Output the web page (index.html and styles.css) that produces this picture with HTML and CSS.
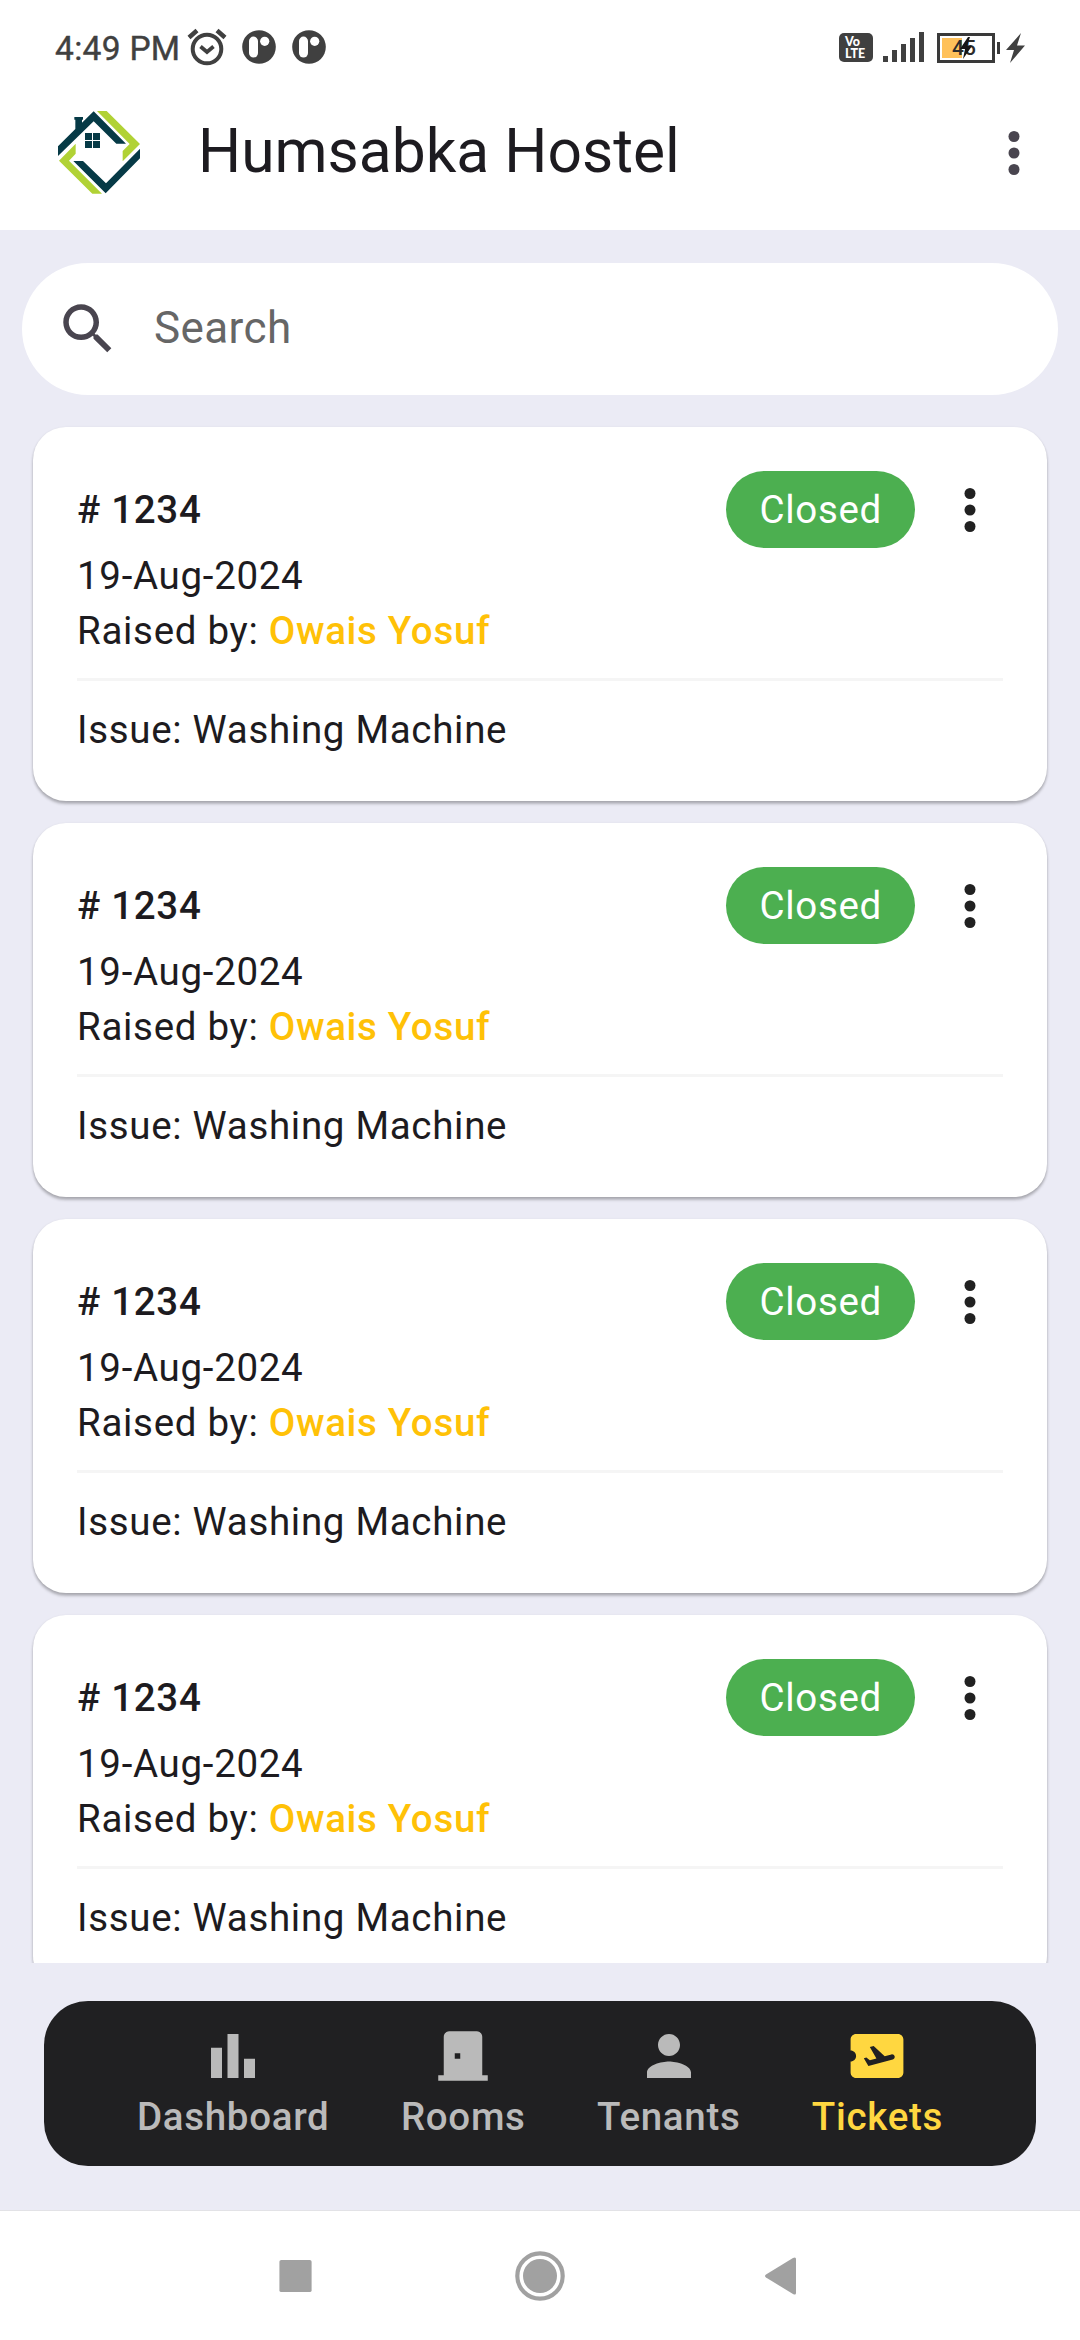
FILE: index.html
```html
<!DOCTYPE html>
<html lang="en">
<head>
<meta charset="utf-8">
<title>Humsabka Hostel</title>
<link rel="stylesheet" href="styles.css">
</head>
<body>
<svg class="defs" aria-hidden="true">
  <symbol id="more" viewBox="0 0 24 24"><circle cx="12" cy="6" r="2"/><circle cx="12" cy="12" r="2"/><circle cx="12" cy="18" r="2"/></symbol>
  <symbol id="chat" viewBox="0 0 34 34"><circle cx="17" cy="17" r="16.8"/><rect x="7" y="6.6" width="9" height="21" rx="4.5" fill="#fff"/><circle cx="22.7" cy="11.3" r="4.6" fill="#fff"/></symbol>
</svg>
<div class="screen">
  <div class="status">
    <span class="time">4:49 PM</span>
    <svg class="alarm" viewBox="0 0 40 38"><g fill="none" stroke="#404040"><circle cx="20" cy="21" r="14.3" stroke-width="4"/><path d="M2 9.500 10 2.500M38 9.500 30 2.500" stroke-width="4.500"/><path d="M13.500 18.500 20 24 26.500 18.500" stroke-width="3.800"/></g></svg>
    <svg class="chat"><use href="#chat"/></svg>
    <svg class="chat"><use href="#chat"/></svg>
    <div class="status-right">
      <div class="volte"><span>Vo</span><span>LTE</span></div>
      <svg class="signal" viewBox="0 0 41 30"><path d="M0 24h5v6H0zM9 18h5v12H9zM18 12h5v18h-5zM27 6h5v24h-5zM36 0h5v30h-5z"/></svg>
      <div class="battery"><span class="level"></span><span class="percent">45</span>
        <svg class="charge" viewBox="0 0 16 22"><path d="M10 0 2 12h5L5 22l9-13H9l3-9z"/></svg></div>
      <span class="cap"></span>
      <svg class="bolt" viewBox="0 0 19 30"><path d="M15 0 0 17h8L4 30 19 12.500h-8z"/></svg>
    </div>
  </div>
  <header class="appbar">
    <svg class="logo" viewBox="0 0 300 300">
      <g fill="#b1d235"><path d="M141 30h29l100 99-52 52v-31l21-21z"/><path d="M77 128v30l-20 21 99 99h-29L27 179z"/></g>
      <g fill="#063a46"><path d="M24 165v-29l52-52V56h-3v-8h26v8h-3v9l35-34 97 97h-29l-68-67z"/><path d="M70 180h29l69 67 102-104v29L167 277z"/><path d="M105 96h21v21h-21zM129 96h21v21h-21zM105 120h21v21h-21zM129 120h21v21h-21z"/></g>
    </svg>
    <h1>Humsabka Hostel</h1>
    <svg class="icon"><use href="#more"/></svg>
  </header>
  <main>
    <div class="search">
      <svg class="icon" viewBox="0 0 24 24"><path d="M15.500 14h-.79l-.28-.27C15.410 12.590 16 11.110 16 9.500 16 5.910 13.090 3 9.500 3S3 5.910 3 9.500 5.910 16 9.500 16c1.610 0 3.090-.59 4.230-1.570l.27.28v.79l5 4.990L20.490 19l-4.990-5zm-6 0C7.010 14 5 11.990 5 9.500S7.010 5 9.500 5 14 7.010 14 9.500 11.990 14 9.500 14z"/></svg>
      <span>Search</span>
    </div>
    <div class="list">
      <article class="card">
        <div class="head"><strong># 1234</strong><span class="chip">Closed</span><svg class="icon"><use href="#more"/></svg></div>
        <p>19-Aug-2024</p>
        <p>Raised by: <b>Owais Yosuf</b></p>
        <hr>
        <p>Issue: Washing Machine</p>
      </article>
      <article class="card">
        <div class="head"><strong># 1234</strong><span class="chip">Closed</span><svg class="icon"><use href="#more"/></svg></div>
        <p>19-Aug-2024</p>
        <p>Raised by: <b>Owais Yosuf</b></p>
        <hr>
        <p>Issue: Washing Machine</p>
      </article>
      <article class="card">
        <div class="head"><strong># 1234</strong><span class="chip">Closed</span><svg class="icon"><use href="#more"/></svg></div>
        <p>19-Aug-2024</p>
        <p>Raised by: <b>Owais Yosuf</b></p>
        <hr>
        <p>Issue: Washing Machine</p>
      </article>
      <article class="card">
        <div class="head"><strong># 1234</strong><span class="chip">Closed</span><svg class="icon"><use href="#more"/></svg></div>
        <p>19-Aug-2024</p>
        <p>Raised by: <b>Owais Yosuf</b></p>
        <hr>
        <p>Issue: Washing Machine</p>
      </article>
    </div>
  </main>
  <nav class="tabs">
    <div class="tab"><svg class="icon" viewBox="0 0 24 24"><path d="M4 9h4v11H4zM16 13h4v7h-4zM10 4h4v16h-4z"/></svg><span>Dashboard</span></div>
    <div class="tab"><svg class="icon" viewBox="0 0 24 24"><path d="M19 19V5c0-1.100-.9-2-2-2H7c-1.100 0-2 .9-2 2v14H3v2h18v-2h-2zm-8-6H9v-2h2v2z"/></svg><span>Rooms</span></div>
    <div class="tab"><svg class="icon" viewBox="0 0 24 24"><path d="M12 12c2.210 0 4-1.790 4-4s-1.790-4-4-4-4 1.790-4 4 1.790 4 4 4zm0 2c-2.670 0-8 1.340-8 4v2h16v-2c0-2.660-5.330-4-8-4z"/></svg><span>Tenants</span></div>
    <div class="tab active"><svg class="icon" viewBox="0 0 24 24"><path d="M19.600 4H4.400c-1.100 0-2 .9-2 2v4c1.100 0 2 .9 2 2s-.9 2-2 2v4c0 1.100.9 2 2 2h15.200c1.100 0 2-.9 2-2V6c0-1.100-.9-2-2-2zm-1.870 9.300-8.860 2.360-1.660-2.880.93-.25 1.260.99 2.390-.64-2.400-4.160 1.400-.38 4.010 3.740 2.440-.65c.51-.14 1.040.17 1.180.68.13.51-.17 1.040-.69 1.190z"/></svg><span>Tickets</span></div>
  </nav>
  <div class="sysnav">
    <svg viewBox="0 0 34 41"><rect x="0" y="4" width="33" height="33" rx="2"/></svg>
    <svg viewBox="0 0 50 50"><circle cx="25" cy="25" r="22.700" fill="none" stroke="#a1a1a1" stroke-width="4.200"/><circle cx="25" cy="25" r="17"/></svg>
    <svg viewBox="3 0 34 40"><path d="M2 18.500 29 2q3-1.500 3 1v34q0 2.500-3 1L2 21.500q-2-1.500 0-3z"/></svg>
  </div>
</div>
</body>
</html>
```
FILE: styles.css
```css
* { box-sizing: border-box; margin: 0; padding: 0; }
body { font-family: Roboto, "Noto Sans", sans-serif; background: #ebebf5; color: #1d1b20; }
.defs { display: none; }
.screen { width: 1080px; height: 2340px; overflow: hidden; display: flex; flex-direction: column; }
.icon { width: 66px; height: 66px; flex: none; fill: currentColor; }

.status { height: 94px; background: #fff; color: #404040; fill: #404040; display: flex; align-items: center; padding: 0 55px 0 55px; }
.time { font-size: 33.5px; letter-spacing: 0.3px; -webkit-text-stroke: 0.4px #404040; line-height: 40px; width: 132px; white-space: nowrap; padding-top: 3px; }
.alarm { width: 40px; height: 38px; }
.chat { width: 34px; height: 34px; margin-left: 16px; }
.alarm + .chat { margin-left: 15px; }
.status-right { margin-left: auto; display: flex; align-items: center; padding-top: 1px; }
.volte { width: 34px; height: 29px; border-radius: 5px; background: #404040; color: #fff; font: 900 12.5px/12px Lato, sans-serif; display: flex; flex-direction: column; padding: 3px 0 0 6px; }
.signal { width: 41px; height: 30px; margin: -1px 0 0 10px; }
.battery { position: relative; width: 58px; height: 30px; border: 3px solid #3a3a3a; margin-left: 13px; padding: 2px; display: flex; }
.level { width: 20px; background: #ffc15a; }
.percent { position: absolute; left: 12px; top: 0; font: 500 21px/24px Roboto, sans-serif; color: #2c2c2c; }
.charge { position: absolute; left: 18px; top: 1px; width: 16px; height: 22px; fill: #161616; }
.cap { width: 3px; height: 12px; background: #3a3a3a; margin-left: 2px; }
.bolt { width: 19px; height: 30px; margin-left: 6px; }

.appbar { height: 136px; background: #fff; display: flex; align-items: center; padding: 0 33px 22px 50px; }
.logo { width: 100px; height: 100px; flex: none; margin: -1px 48px 0 0; }
.appbar h1 { flex: 1; font-size: 60.5px; font-weight: 400; line-height: 77px; white-space: nowrap; }
.appbar .icon { color: #49454f; margin-top: 3px; }

main { height: 1733px; padding-top: 33px; display: flex; flex-direction: column; overflow: hidden; }
.search { flex: none; height: 132px; margin: 0 22px; padding-left: 33px; border-radius: 66px; background: #fff; display: flex; align-items: center; gap: 33px; color: #49454f; }
.search span { font-size: 44px; letter-spacing: 0.4px; color: #666; padding-bottom: 2px; }
.list { flex: 1; min-height: 0; overflow: hidden; padding: 32px 33px 0; display: flex; flex-direction: column; gap: 22px; }
.card { flex: none; height: 374px; padding: 44px; border-radius: 33px; background: #fff; box-shadow: 0 3px 3px rgba(0,0,0,.22), 0 1px 3px rgba(0,0,0,.12); font-size: 38.5px; line-height: 55px; letter-spacing: 0.69px; }
.head { height: 77px; display: flex; align-items: center; }
.head strong { font-weight: 500; flex: 1; }
.chip { height: 77px; line-height: 77px; border-radius: 38.5px; padding: 0 33px; background: #4caf50; color: #fff; }
.head .icon { color: #212121; margin-left: 22px; }
.card b { font-weight: 500; color: #ffc107; }
.card hr { border: 0; height: 3px; margin: 20px 0 21px; background: #f5f5f5; }

.tabs { flex: none; height: 165px; margin: 38px 44px 44px; border-radius: 44px; background: #202022; color: #bababa; display: flex; justify-content: center; gap: 71.4px; padding-top: 22px; }
.tab { display: flex; flex-direction: column; align-items: center; font-size: 38.5px; font-weight: 500; line-height: 55px; letter-spacing: 0.69px; }
.tab.active { color: #ffd740; }

.sysnav { height: 130px; background: #fff; border-top: 1px solid #e2e2e6; display: flex; align-items: center; padding: 0 279px; justify-content: space-between; fill: #a1a1a1; }
.sysnav svg { width: 34px; height: 40px; overflow: visible; }
.sysnav svg:nth-child(2) { width: 50px; height: 50px; }
```
